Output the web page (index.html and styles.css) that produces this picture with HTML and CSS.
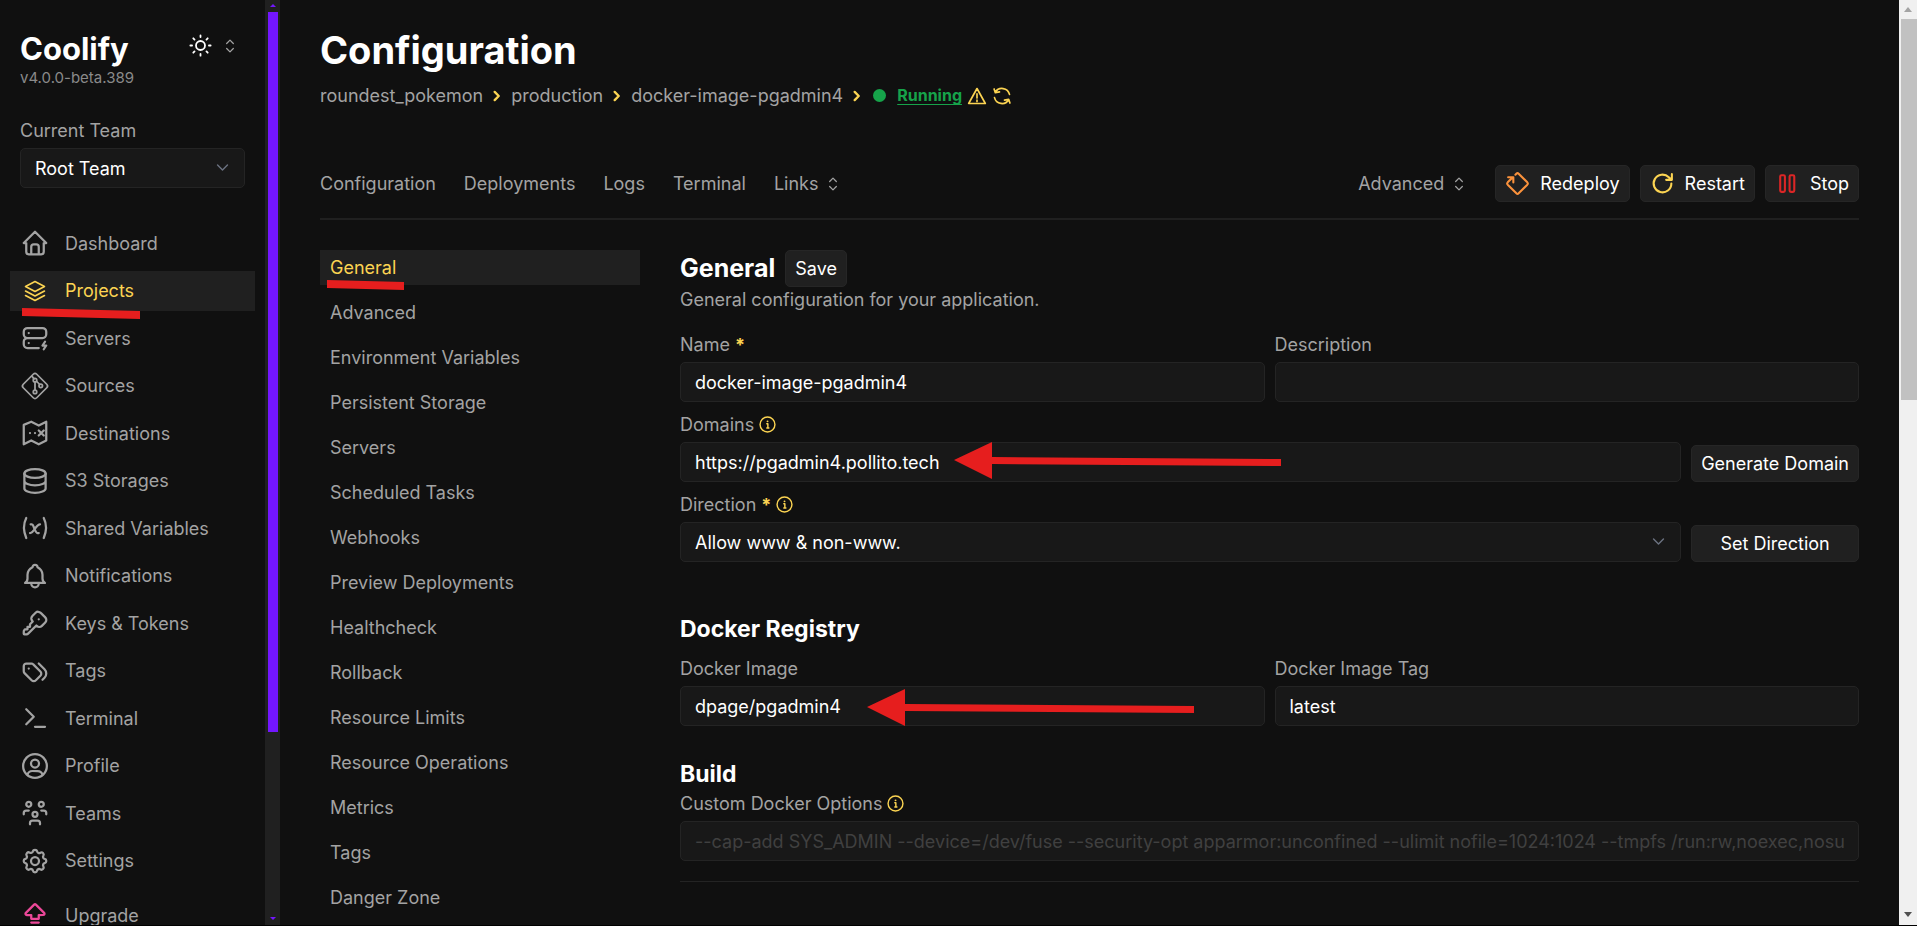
FILE: index.html
```html
<!DOCTYPE html>
<html lang="en">
<head>
<meta charset="utf-8">
<meta name="viewport" content="width=device-width, initial-scale=1">
<title>Configuration | Coolify</title>
<link rel="stylesheet" href="styles.css">
</head>
<body>
<svg class="sprite" aria-hidden="true">
  <symbol id="i-updown" viewBox="0 0 24 24"><path d="M8 9l4-4 4 4M16 15l-4 4-4-4"/></symbol>
  <symbol id="i-down" viewBox="0 0 24 24"><path d="M5 8.500l7 7 7-7"/></symbol>
  <symbol id="i-sep" viewBox="0 0 24 24"><path d="M8 5l7 7-7 7"/></symbol>
  <symbol id="i-info" viewBox="0 0 24 24"><circle cx="12" cy="12" r="10.500"/><path d="M11 11h1.500v6M11 17h3"/><path d="M12 7.500h.1" stroke-width="2.600"/></symbol>
</svg>

<div class="app">
  <aside class="sidebar">
    <div class="brand">
      <div>
        <a class="brand-name" href="#">Coolify</a>
        <div class="version">v4.0.0-beta.389</div>
      </div>
      <button class="theme" type="button" aria-label="Theme">
        <svg class="icon sun" viewBox="0 0 24 24"><path d="M12 3v1.500M12 19.500V21M3 12h1.500M19.500 12H21M5.600 5.600l1.100 1.100M17.300 17.300l1.100 1.100M5.600 18.400l1.100-1.100M17.300 6.700l1.100-1.100M16 12a4 4 0 1 1-8 0 4 4 0 0 1 8 0z"/></svg>
        <svg class="icon updown"><use href="#i-updown"/></svg>
      </button>
    </div>
    <div class="team">
      <label class="label" for="team">Current Team</label>
      <div class="select"><select id="team" class="control"><option>Root Team</option></select><svg class="icon"><use href="#i-down"/></svg></div>
    </div>
    <nav class="menu">
      <a href="#"><svg class="icon" viewBox="0 0 24 24"><path d="M5 12H3l9-9 9 9h-2M5 12v7a2 2 0 0 0 2 2h10a2 2 0 0 0 2-2v-7M9 21v-6a2 2 0 0 1 2-2h2a2 2 0 0 1 2 2v6"/></svg>Dashboard</a>
      <a href="#" class="active"><svg class="icon thin" viewBox="0 0 24 24"><path d="M12 2.500l9.500 5-9.500 5-9.500-5zM2.500 12l9.500 5 9.500-5M2.500 16.500l9.500 5 9.500-5"/></svg>Projects
        <svg class="mark mark-projects" viewBox="0 0 118 12"><path d="M0 0l118 3v8L0 8z"/></svg></a>
      <a href="#"><svg class="icon" viewBox="0 0 24 24"><path d="M3 7a3 3 0 0 1 3-3h12a3 3 0 0 1 3 3v2a3 3 0 0 1-3 3H6a3 3 0 0 1-3-3zM15 20H6a3 3 0 0 1-3-3v-2a3 3 0 0 1 3-3h12M7 8v.01M7 16v.01M20 15l-2 3h3l-2 3"/></svg>Servers</a>
      <a href="#"><svg class="icon big" viewBox="0 0 24 24"><path d="M13.400 2.600l8 8a2 2 0 0 1 0 2.800l-8 8a2 2 0 0 1-2.800 0l-8-8a2 2 0 0 1 0-2.800l8-8a2 2 0 0 1 2.800 0zM9.500 4l1.700 2.300M12 8.700v6.600M13.200 8.200l2.600 2.600"/><circle cx="12" cy="7.300" r="1.400"/><circle cx="12" cy="16.700" r="1.400"/><circle cx="16.600" cy="11.800" r="1.400"/></svg>Sources</a>
      <a href="#"><svg class="icon" viewBox="0 0 24 24"><path d="M3 5.500L9 3l6 3 6-3v15l-6 3-6-3-6 3zM8 12v.01M12 12v.01M15 10l4 4M19 10l-4 4"/></svg>Destinations</a>
      <a href="#"><svg class="icon" viewBox="0 0 24 24"><ellipse cx="12" cy="6" rx="8.500" ry="3.500"/><path d="M3.500 6v6c0 1.900 3.800 3.500 8.500 3.500s8.500-1.600 8.500-3.500V6M3.500 12v6c0 1.900 3.800 3.500 8.500 3.500s8.500-1.600 8.500-3.500v-6"/></svg>S3 Storages</a>
      <a href="#"><svg class="icon" viewBox="0 0 24 24"><path d="M5 4c-2.500 5-2.500 10 0 16M19 4c2.500 5 2.500 10 0 16M8.500 9h1c1 0 1 1 2 3.500s1.500 3.500 2.500 3.500h1M8 16c1.500 0 3-2 4-3.500S14.500 9 16 9"/></svg>Shared Variables</a>
      <a href="#"><svg class="icon" viewBox="0 0 24 24"><path d="M10 5a2 2 0 0 1 4 0 7 7 0 0 1 4 6v3a4 4 0 0 0 2 3.500H4A4 4 0 0 0 6 14v-3a7 7 0 0 1 4-6M9 17.500v.5a3 3 0 0 0 6 0v-.5"/></svg>Notifications</a>
      <a href="#"><svg class="icon" viewBox="0 0 24 24"><path d="M16.600 3.900l3.600 3.600a2.900 2.900 0 0 1 0 4.100l-2.700 2.700a2.900 2.900 0 0 1-4.100 0l-.3-.3-6.600 6.500a2 2 0 0 1-1.300.6H3.500a.5.5 0 0 1-.5-.5v-1.700a2 2 0 0 1 .5-1.300l.5-.6h2v-2h2v-2l2.200-2.200-.3-.3a2.900 2.900 0 0 1 0-4.100l2.600-2.600a2.900 2.900 0 0 1 4.100.1zM15 9h.01"/></svg>Keys &amp; Tokens</a>
      <a href="#"><svg class="icon" viewBox="0 0 24 24"><path d="M3 8v4.200c0 .6.200 1.100.6 1.500l5.700 5.700a2.400 2.400 0 0 0 3.400 0l3.600-3.600a2.400 2.400 0 0 0 0-3.400l-5.700-5.700A2 2 0 0 0 9.200 6H5a2 2 0 0 0-2 2zM18 19l1.600-1.600a4.800 4.800 0 0 0 0-6.800L15 6M7 10h.01"/></svg>Tags</a>
      <a href="#"><svg class="icon" viewBox="0 0 24 24"><path d="M5 5l6 6-6 6M12 19h8"/></svg>Terminal</a>
      <a href="#"><svg class="icon" viewBox="0 0 24 24"><circle cx="12" cy="12" r="9.500"/><circle cx="12" cy="10" r="3.200"/><path d="M6 18.900A4 4 0 0 1 9.800 16h4.400a4 4 0 0 1 3.800 2.900"/></svg>Profile</a>
      <a href="#"><svg class="icon" viewBox="0 0 24 24"><circle cx="12" cy="13" r="2"/><path d="M8 21v-1a2 2 0 0 1 2-2h4a2 2 0 0 1 2 2v1M17 10h2a2 2 0 0 1 2 2v1M3 13v-1a2 2 0 0 1 2-2h2"/><circle cx="17" cy="5" r="2"/><circle cx="7" cy="5" r="2"/></svg>Teams</a>
      <a href="#"><svg class="icon" viewBox="0 0 24 24"><path d="M10.300 4.300c.4-1.700 3-1.700 3.400 0a1.700 1.700 0 0 0 2.600 1.100c1.500-1 3.300.8 2.400 2.300a1.700 1.700 0 0 0 1 2.600c1.800.4 1.800 3 0 3.400a1.700 1.700 0 0 0-1 2.600c.9 1.500-.9 3.300-2.400 2.400a1.700 1.700 0 0 0-2.600 1c-.4 1.800-3 1.800-3.400 0a1.700 1.700 0 0 0-2.600-1c-1.500.9-3.300-.9-2.400-2.400a1.700 1.700 0 0 0-1-2.600c-1.800-.4-1.800-3 0-3.400a1.700 1.700 0 0 0 1-2.600c-.9-1.500.9-3.300 2.400-2.400 1 .6 2.300.1 2.600-1z"/><circle cx="12" cy="12" r="3.200"/></svg>Settings</a>
    </nav>
    <div class="menu-foot">
      <a href="#"><svg class="icon pink" viewBox="0 0 24 24"><path d="M9 12H5.400a1 1 0 0 1-.7-1.700l6.600-6.600a1 1 0 0 1 1.400 0l6.600 6.600a1 1 0 0 1-.7 1.700H15v3H9zM9 21h6M9 18h6"/></svg>Upgrade</a>
    </div>
  </aside>
  <div class="side-scroll" aria-hidden="true">
    <svg viewBox="0 0 6 3"><path d="M0 3l3-3 3 3z"/></svg>
    <div class="side-track"><div class="side-thumb"></div></div>
    <svg viewBox="0 0 6 3"><path d="M0 0l3 3 3-3z"/></svg>
  </div>

  <main class="main">
    <h1>Configuration</h1>
    <div class="crumbs">
      <a href="#">roundest_pokemon</a><svg class="icon sep"><use href="#i-sep"/></svg>
      <a href="#">production</a><svg class="icon sep"><use href="#i-sep"/></svg>
      <a href="#">docker-image-pgadmin4</a><svg class="icon sep"><use href="#i-sep"/></svg>
      <span class="dot"></span>
      <a class="running" href="#">Running</a>
      <svg class="icon warn" viewBox="0 0 24 24"><path d="M12 3L22 21H2zM12 9.500v5M12 17v1.500"/></svg>
      <button class="plain" type="button" aria-label="Refresh"><svg class="icon warn" viewBox="0 0 24 24"><path d="M21 10A9.300 9.300 0 0 0 4 7.500M2.500 3.500L4 8l5-1M3 14a9.300 9.300 0 0 0 17 2.500M21.500 20.500L20 16l-5 1"/></svg></button>
    </div>

    <div class="toolbar">
      <nav class="tabs">
        <a href="#">Configuration</a><a href="#">Deployments</a><a href="#">Logs</a><a href="#">Terminal</a>
        <button class="plain drop" type="button">Links<svg class="icon updown"><use href="#i-updown"/></svg></button>
      </nav>
      <div class="actions">
        <button class="plain drop advanced" type="button">Advanced<svg class="icon updown"><use href="#i-updown"/></svg></button>
        <button class="btn" type="button"><svg class="icon orange" viewBox="0 0 24 24"><path d="M10 3.500l.9-.9a1.600 1.600 0 0 1 2.200 0l8.300 8.300a1.600 1.600 0 0 1 0 2.200l-8.300 8.300a1.600 1.600 0 0 1-2.200 0L2.600 13.100a1.600 1.600 0 0 1 0-2.200L7.500 6M3 6h5v5"/></svg>Redeploy</button>
        <button class="btn" type="button"><svg class="icon yellow" viewBox="0 0 24 24"><path d="M20.500 12A8.500 8.500 0 1 1 18 6l2.500 2.500M21 3v5.500h-5.500"/></svg>Restart</button>
        <button class="btn" type="button"><svg class="icon red" viewBox="0 0 24 24"><rect x="5" y="4" width="4.500" height="16" rx="1.200"/><rect x="14" y="4" width="4.500" height="16" rx="1.200"/></svg>Stop</button>
      </div>
    </div>

    <div class="body">
      <nav class="subnav">
        <a href="#" class="active">General<svg class="mark mark-general" viewBox="0 0 77 10"><path d="M0 0l77 2v8L0 8z"/></svg></a>
        <a href="#">Advanced</a><a href="#">Environment Variables</a><a href="#">Persistent Storage</a><a href="#">Servers</a><a href="#">Scheduled Tasks</a><a href="#">Webhooks</a><a href="#">Preview Deployments</a><a href="#">Healthcheck</a><a href="#">Rollback</a><a href="#">Resource Limits</a><a href="#">Resource Operations</a><a href="#">Metrics</a><a href="#">Tags</a><a href="#">Danger Zone</a>
      </nav>

      <form class="form">
        <div class="form-head"><h2>General</h2><button class="btn" type="button">Save</button></div>
        <p class="hint">General configuration for your application.</p>

        <div class="fields">
          <div class="pair">
            <div class="field"><label class="label" for="name">Name <b>*</b></label><input class="control" id="name" type="text" value="docker-image-pgadmin4"></div>
            <div class="field"><label class="label" for="desc">Description</label><input class="control" id="desc" type="text"></div>
          </div>
          <div class="with-button">
            <div class="field"><label class="label" for="domains">Domains <svg class="icon info"><use href="#i-info"/></svg></label><input class="control" id="domains" type="text" value="https://pgadmin4.pollito.tech">
              <svg class="arrow arrow-domain" viewBox="0 0 327 38"><path d="M0 18L38 0v15l289 2v7l-289-2v15z"/></svg></div>
            <button class="btn" type="button">Generate Domain</button>
            <div class="field"><label class="label" for="direction">Direction <b>*</b> <svg class="icon info"><use href="#i-info"/></svg></label>
              <div class="select"><select class="control" id="direction"><option>Allow www &amp; non-www.</option></select><svg class="icon"><use href="#i-down"/></svg></div></div>
            <button class="btn" type="button">Set Direction</button>
          </div>
        </div>

        <h3 class="registry">Docker Registry</h3>
        <div class="pair">
          <div class="field"><label class="label" for="image">Docker Image</label><input class="control" id="image" type="text" value="dpage/pgadmin4">
            <svg class="arrow arrow-image" viewBox="0 0 327 38"><path d="M0 18L38 0v15l289 2v7l-289-2v15z"/></svg></div>
          <div class="field"><label class="label" for="tag">Docker Image Tag</label><input class="control" id="tag" type="text" value="latest"></div>
        </div>

        <h3 class="build">Build</h3>
        <div class="field"><label class="label" for="options">Custom Docker Options <svg class="icon info"><use href="#i-info"/></svg></label><input class="control" id="options" type="text" placeholder="--cap-add SYS_ADMIN --device=/dev/fuse --security-opt apparmor:unconfined --ulimit nofile=1024:1024 --tmpfs /run:rw,noexec,nosuid,size=65536k"></div>
        <hr>
      </form>
    </div>
  </main>

  <div class="page-scroll" aria-hidden="true">
    <svg viewBox="0 0 8 5"><path fill="#a3a3a3" d="M0 5l4-5 4 5z"/></svg>
    <div class="page-track"><div class="page-thumb"></div></div>
    <svg viewBox="0 0 8 5"><path fill="#505050" d="M0 0l4 5 4-5z"/></svg>
  </div>
</div>
</body>
</html>
```
FILE: styles.css
```css
:root {
  --bg: #101010;
  --panel: #181818;
  --line: #242424;
  --raise: #202020;
  --muted: #a3a3a3;
  --yellow: #fcd452;
  --text: 18px;
}
* { box-sizing: border-box; }
body {
  margin: 0;
  height: 100vh;
  overflow: hidden;
  background: var(--bg);
  border-bottom: 1px solid #000;
  color: var(--muted);
  font: 400 var(--text)/25px Inter, "Liberation Sans", sans-serif;
}
a { color: inherit; text-decoration: none; }
h1, h2, h3, p { margin: 0; }
h1, h2, h3 { color: #fff; font-weight: 700; }
button, input, select { font: inherit; color: #fff; margin: 0; }
.sprite { display: none; }
.icon {
  flex: none;
  width: 20px;
  height: 20px;
  fill: none;
  stroke: currentColor;
  stroke-width: 2;
  stroke-linecap: round;
  stroke-linejoin: round;
}
.icon.updown { width: 20px; height: 20px; stroke-width: 1.5; color: var(--muted); }
.plain { display: flex; align-items: center; padding: 0; border: 0; background: none; color: inherit; }

.app { display: flex; height: 100%; }

/* Sidebar */
.sidebar { display: flex; flex-direction: column; flex: none; width: 265px; padding: 0 10px; overflow: hidden; }
.brand { display: flex; justify-content: space-between; padding: 30px 10px 0; }
.brand-name { display: block; color: #fff; font-size: 31px; font-weight: 700; line-height: 38px; }
.version { font-size: 15px; line-height: 20px; color: #8a8a8a; }
.theme { display: flex; align-items: center; gap: 6px; height: 31px; padding: 0 5px 0 0; border: 0; background: none; }
.icon.sun { width: 27px; height: 27px; stroke-width: 1.6; color: #fff; }
.team { padding: 30px 10px 35px; }
.label { display: flex; align-items: center; gap: 5px; height: 25px; margin-bottom: 5px; }
.label b { color: var(--yellow); }
.control {
  display: block;
  width: 100%;
  height: 40px;
  padding: 0 14px;
  border: 1px solid var(--line);
  border-radius: 5px;
  background: var(--panel);
  outline: 0;
  appearance: none;
  text-overflow: clip;
}
.control::placeholder { color: #404040; opacity: 1; }
.select { position: relative; }
.select .icon { position: absolute; right: 14px; top: 11px; width: 17px; height: 17px; color: #6b7280; pointer-events: none; }
.menu { display: flex; flex: 1; flex-direction: column; justify-content: space-between; min-height: 0; }
.menu a, .menu-foot a { position: relative; display: flex; align-items: center; gap: 15px; height: 40px; padding: 0 10px; }
.menu .icon, .menu-foot .icon { width: 30px; height: 30px; stroke-width: 1.8; }
.menu .icon.thin { padding: 3px; stroke-width: 1.6; }
.menu .icon.big { stroke-width: 1.4; }
.menu-foot { height: 44px; padding-top: 14px; }
.menu-foot .pink { color: #ec4899; }
a.active { color: var(--yellow); background: var(--raise); }
.mark, .arrow { position: absolute; z-index: 1; fill: #e61e1e; pointer-events: none; }
.mark-projects { left: 12px; top: 37px; width: 118px; }

.side-scroll { display: flex; flex-direction: column; align-items: center; flex: none; width: 15px; padding: 4px 0 5px; background: var(--raise); }
.side-scroll svg { width: 6px; height: 3px; fill: #7316ff; }
.side-track { flex: 1; width: 10px; padding: 5px 0; }
.side-thumb { height: 80%; background: #7316ff; }

/* Main column */
.main { flex: 1; min-width: 0; padding: 27px 40px 0; overflow: hidden; }
h1 { font-size: 38px; line-height: 47px; }
.crumbs { display: flex; align-items: center; height: 25px; margin-top: 9px; }
.icon.sep { width: 14px; height: 14px; margin: 0 7px; stroke-width: 4; color: var(--yellow); }
.dot { width: 13px; height: 13px; margin: 0 11px 0 2px; border-radius: 50%; background: #16a34a; }
.running { color: #16a34a; font-size: 16px; font-weight: 700; text-decoration: underline; text-underline-offset: 3px; }
.icon.warn { margin-left: 5px; color: var(--yellow); }
.toolbar { display: flex; justify-content: space-between; align-items: center; margin-top: 57px; padding-bottom: 16px; border-bottom: 2px solid var(--raise); }
.tabs { display: flex; gap: 28px; }
.drop { gap: 5px; }
.actions { display: flex; gap: 10px; }
.advanced { margin-right: 16px; }
.btn {
  display: flex;
  align-items: center;
  justify-content: center;
  gap: 10px;
  height: 37px;
  padding: 0 9px;
  border: 1px solid #262626;
  border-radius: 5px;
  background: var(--raise);
  white-space: nowrap;
}
.btn .icon { width: 25px; height: 25px; }
.orange { color: #fb923c; }
.yellow { color: var(--yellow); }
.red { color: #dc2626; }

.body { display: flex; gap: 40px; padding-top: 30px; }
.subnav { display: flex; flex: none; flex-direction: column; gap: 10px; width: 320px; }
.subnav a { position: relative; height: 35px; padding: 0 10px; line-height: 35px; }
.mark-general { left: 7px; top: 30px; width: 77px; }

.form { flex: 1; min-width: 0; }
.form-head { display: flex; align-items: center; gap: 10px; }
h2 { font-size: 25px; line-height: 35px; }
h3 { font-size: 23px; line-height: 30px; }
.hint { margin-bottom: 20px; }
.fields { display: grid; gap: 10px; }
.pair { display: grid; grid-template-columns: 1fr 1fr; gap: 10px; }
.with-button { display: grid; grid-template-columns: 1fr auto; gap: 10px; align-items: end; }
.field { position: relative; min-width: 0; }
.icon.info { width: 17px; height: 17px; color: var(--yellow); }
.arrow { width: 327px; height: 38px; }
.arrow-domain { left: 274px; top: 30px; }
.arrow-image { left: 187px; top: 33px; }
.registry { margin: 52px 0 12px; }
.build { margin: 33px 0 2px; }
hr { height: 1px; margin: 20px 0 0; border: 0; background: var(--line); }

/* Page scroll bar */
.page-scroll { display: flex; flex-direction: column; align-items: center; flex: none; width: 18px; padding: 7px 0 8px; background: #f0f0f0; }
.page-scroll svg { width: 8px; height: 5px; }
.page-track { flex: 1; align-self: stretch; padding: 7px 0 7px 2px; }
.page-thumb { height: 43%; background: #c1c1c1; }
```
